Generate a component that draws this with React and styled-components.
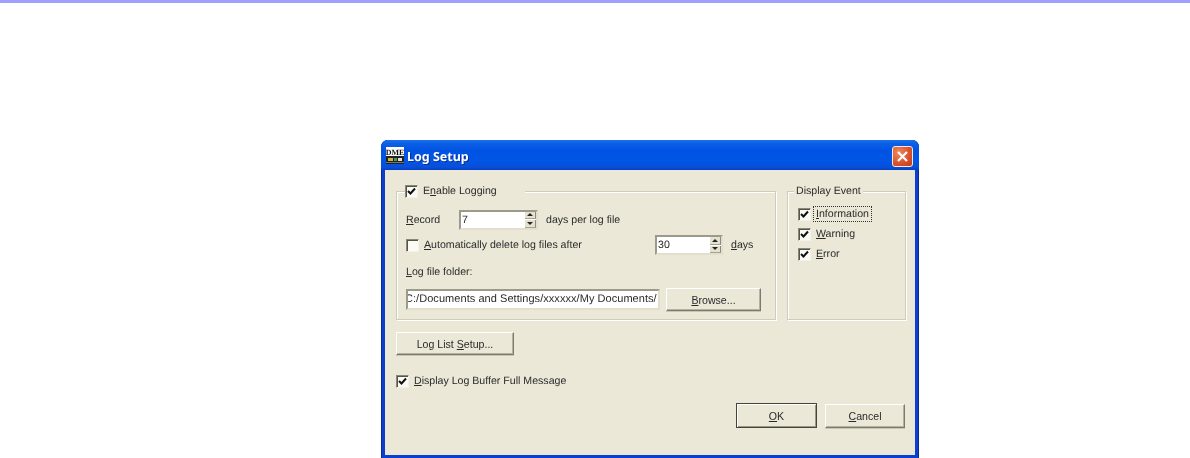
import styled, { createGlobalStyle } from "styled-components";

const GlobalStyle = createGlobalStyle`
  html, body {
    margin: 0;
    height: 458px;
    overflow: hidden;
    background: #fff;
  }
`;

const Page = styled.div`
  height: 458px;
  box-sizing: border-box;
  border-top: 3px solid #9f9fff;
  padding: 137px 0 0 381px;
  font-family: "Liberation Sans", Arial, sans-serif;
  font-size: 10.6px;
  text-rendering: geometricPrecision;
  color: #2a2a2a;
`;

const Dialog = styled.div`
  width: 538px;
  height: 318px;
  box-sizing: border-box;
  display: flex;
  flex-direction: column;
  background: #0a3fd0;
  border-radius: 7px 7px 0 0;
  overflow: hidden;
  padding: 0 4px 3px 4px;
  box-shadow: inset 1px 0 0 #0a2a90, inset -1px 0 0 #0a2a90;
  filter: blur(0.3px);
`;

const TitleBar = styled.div`
  height: 30px;
  flex: none;
  box-sizing: border-box;
  margin: 0 -4px;
  padding: 2px 6px 0 5px;
  display: flex;
  align-items: center;
  gap: 3px;
  background: linear-gradient(#1a70ee 0%, #0a5fe6 12%, #0053e2 35%, #0056e6 70%, #0a4fd8 90%, #0340c8 100%);
`;

const TitleText = styled.span`
  flex: 1;
  color: #fff;
  font-family: "Noto Sans", sans-serif;
  font-weight: 700;
  font-size: 12.5px;
  text-shadow: 1px 1px 0 #0a2f9a;
`;

const CloseButton = styled.div`
  width: 21px;
  height: 21px;
  border: 1px solid #f5e8e0;
  border-radius: 3px;
  box-sizing: border-box;
  background: radial-gradient(circle at 30% 30%, #ee8a60, #d9502a 60%, #c23a18);
  display: flex;
  align-items: center;
  justify-content: center;
`;

const Client = styled.div`
  flex: 1;
  background: #ebe8d8;
  padding: 14px 8px 0 11px;
  display: flex;
  flex-direction: column;
`;

const TopRow = styled.div`
  display: flex;
  gap: 11px;
`;

const Group = styled.fieldset`
  margin: 0;
  flex: none;
  width: ${(p) => p.$width}px;
  height: 136px;
  box-sizing: border-box;
  padding: 0 0 0 ${(p) => p.$padLeft}px;
  border: 1px solid #cfccba;
  box-shadow: 1px 1px 0 #fff, inset 1px 1px 0 #fff;
  display: flex;
  flex-direction: column;
`;

const Legend = styled.legend`
  padding: 0;
  margin-left: ${(p) => p.$left}px;
  width: ${(p) => p.$width}px;
  height: 14px;
  background: #ebe8d8;
  display: flex;
  align-items: center;
  line-height: 14px;
`;

const Row = styled.div`
  display: flex;
  align-items: center;
  height: ${(p) => p.$height || 20}px;
  margin-top: ${(p) => p.$top || 0}px;
`;

const Label = styled.span`
  white-space: nowrap;
  margin-left: ${(p) => p.$left || 0}px;
  ${(p) => p.$width && `width: ${p.$width}px; flex: none;`}
`;

const Key = styled.span`
  text-decoration: underline;
  text-underline-offset: 1px;
`;

const Focus = styled.span`
  outline: 1px dotted #333;
  padding: 1px 2px;
  white-space: nowrap;
  margin-left: ${(p) => p.$left || 0}px;
`;

const Box = styled.span`
  width: 11px;
  height: 11px;
  flex: none;
  margin-left: ${(p) => p.$left || 0}px;
  background: #fbfbf6;
  border: 1px solid;
  border-color: #8a8778 #f4f2e8 #f4f2e8 #8a8778;
  box-shadow: inset 1px 1px 0 #55544b;
  display: inline-flex;
  align-items: center;
  justify-content: center;
`;

const Spin = styled.div`
  width: ${(p) => p.$width}px;
  height: 20px;
  margin-left: ${(p) => p.$left || 0}px;
  box-sizing: border-box;
  flex: none;
  display: flex;
  background: #fff;
  border: 2px solid;
  border-color: #9c9a8a #e2dfcf #e2dfcf #9c9a8a;
  padding-left: 1px;
  line-height: 16px;
`;

const SpinValue = styled.span`
  flex: 1;
`;

const SpinButtons = styled.div`
  width: 11px;
  display: flex;
  flex-direction: column;
  gap: 1px;
  background: #fff;
`;

const SpinButton = styled.div`
  flex: 1;
  background: #e4e1d0;
  border-right: 1px solid #8c8a7c;
  border-bottom: 1px solid #a5a292;
  display: flex;
  align-items: center;
  justify-content: center;
  &::after {
    content: "";
    border-left: 3px solid transparent;
    border-right: 3px solid transparent;
    ${(p) => (p.$down ? "border-top: 3px solid #222;" : "border-bottom: 3px solid #222;")}
  }
`;

const PathField = styled.div`
  width: 254px;
  height: 21px;
  flex: none;
  box-sizing: border-box;
  background: #fff;
  border: 2px solid;
  border-color: #9c9a8a #e2dfcf #e2dfcf #9c9a8a;
  overflow: hidden;
  white-space: nowrap;
  line-height: 17px;
  text-indent: -3px;
  font-size: 11px;
  letter-spacing: 0.05px;
`;

const Button = styled.button`
  width: ${(p) => p.$width}px;
  height: ${(p) => p.$height || 23}px;
  flex: none;
  margin: 0 0 0 ${(p) => p.$left || 0}px;
  padding: 0;
  box-sizing: border-box;
  font: inherit;
  color: inherit;
  background: #ebe8d8;
  border: 1px solid;
  border-color: ${(p) => (p.$primary ? "#44443c" : "#fff #7c7a6c #7c7a6c #fff")};
  box-shadow: ${(p) =>
    p.$primary
      ? "inset 1px 1px 0 #fff, inset -1px -1px 0 #9a9788"
      : "inset -1px -1px 0 #b5b2a2, 0 1px 0 #c8c5b5"};
`;

const Footer = styled.div`
  display: flex;
  justify-content: flex-end;
  align-items: center;
  gap: 8px;
  margin: 15px 0 0;
  padding-right: 2px;
`;

const Check = () => (
  <svg width="9" height="9" viewBox="0 0 9 9">
    <path d="M1 4 L3.5 6.5 L8 1.5" fill="none" stroke="#111" strokeWidth="2" />
  </svg>
);

const Checkbox = ({ checked, left }) => <Box $left={left}>{checked && <Check />}</Box>;

const SpinBox = ({ value, width, left }) => (
  <Spin $width={width} $left={left}>
    <SpinValue>{value}</SpinValue>
    <SpinButtons>
      <SpinButton />
      <SpinButton $down />
    </SpinButtons>
  </Spin>
);

const AppIcon = () => (
  <svg width="18" height="18" viewBox="0 0 18 18" style={{ flex: "none" }}>
    <rect x="0" y="0" width="18" height="9" fill="#fff" />
    <text x="9" y="7.5" fontSize="8" fontWeight="700" fontFamily="Liberation Serif, serif" textAnchor="middle" fill="#111">DME</text>
    <rect x="0" y="9" width="18" height="8" fill="#222" />
    <rect x="2" y="11" width="5" height="3" fill="#c9b63a" />
    <rect x="8" y="11" width="3" height="3" fill="#3aa05a" />
    <rect x="12" y="11" width="4" height="3" fill="#ddd" />
    <rect x="0" y="15" width="18" height="1" fill="#777" />
  </svg>
);

const App = () => (
  <Page>
    <GlobalStyle />
    <Dialog>
      <TitleBar>
        <AppIcon />
        <TitleText>Log Setup</TitleText>
        <CloseButton>
          <svg width="13" height="13" viewBox="0 0 13 13">
            <path d="M2 2 L11 11 M11 2 L2 11" stroke="#fff" strokeWidth="2.2" />
          </svg>
        </CloseButton>
      </TitleBar>
      <Client>
        <TopRow>
          <Group $width={380} $padLeft={9}>
            <Legend $left={-1} $width={120}>
              <Checkbox checked />
              <Label $left={5}>E<Key>n</Key>able Logging</Label>
            </Legend>
            <Row $height={21} $top={11}>
              <Label $width={53}><Key>R</Key>ecord</Label>
              <SpinBox value="7" width={79} />
              <Label $left={8}>days per log file</Label>
            </Row>
            <Row $top={5}>
              <Checkbox />
              <Label $left={5} $width={231}><Key>A</Key>utomatically delete log files after</Label>
              <SpinBox value="30" width={68} />
              <Label $left={8}><Key>d</Key>ays</Label>
            </Row>
            <Row $height={14} $top={10}>
              <Label><Key>L</Key>og file folder:</Label>
            </Row>
            <Row $height={23} $top={9}>
              <PathField>C:/Documents and Settings/xxxxxx/My Documents/</PathField>
              <Button $width={95} $left={6}><Key>B</Key>rowse...</Button>
            </Row>
          </Group>
          <Group $width={119} $padLeft={10}>
            <Legend $left={-4} $width={69}>
              <Label $left={2}>Display Event</Label>
            </Legend>
            <Row $top={6}>
              <Checkbox checked />
              <Focus $left={3}><Key>I</Key>nformation</Focus>
            </Row>
            <Row>
              <Checkbox checked />
              <Label $left={5}><Key>W</Key>arning</Label>
            </Row>
            <Row>
              <Checkbox checked />
              <Label $left={5}><Key>E</Key>rror</Label>
            </Row>
          </Group>
        </TopRow>
        <Row $height={23} $top={12}>
          <Button $width={118}>Log List <Key>S</Key>etup...</Button>
        </Row>
        <Row $height={14} $top={19}>
          <Checkbox checked />
          <Label $left={5}><Key>D</Key>isplay Log Buffer Full Message</Label>
        </Row>
        <Footer>
          <Button $width={81} $height={25} $primary><Key>O</Key>K</Button>
          <Button $width={80} $height={24}><Key>C</Key>ancel</Button>
        </Footer>
      </Client>
    </Dialog>
  </Page>
);

export default App;
